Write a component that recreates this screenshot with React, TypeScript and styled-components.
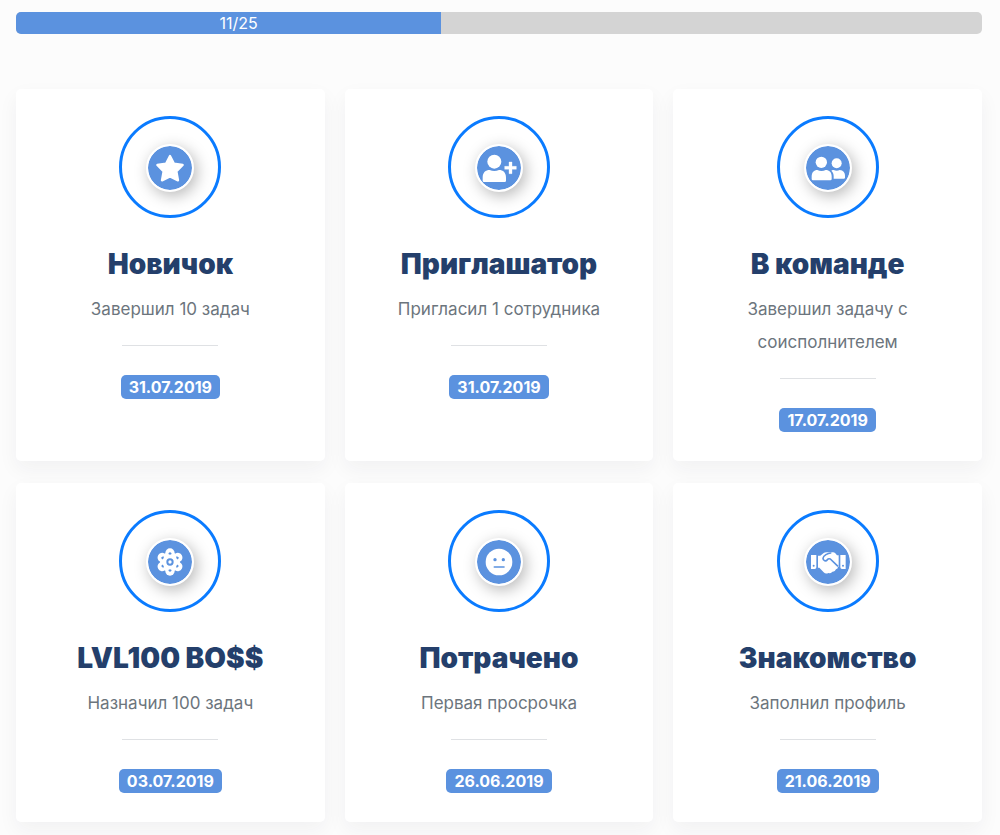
import React from 'react';
import styled, { createGlobalStyle } from 'styled-components';

const GlobalStyle = createGlobalStyle`
  *, *::before, *::after { box-sizing: border-box; }
  body {
    margin: 0;
    background: #fcfcfc;
    font-family: Inter, "Liberation Sans", sans-serif;
    font-optical-sizing: none;
    color: #6c757d;
  }
`;

const Page = styled.main`
  padding: 12px 18px 13px 16px;
`;

const ProgressTrack = styled.div`
  height: 22px;
  border-radius: 5px;
  background: #d4d4d4;
  overflow: hidden;
`;

const ProgressFill = styled.div`
  height: 100%;
  padding-left: 20px;
  background: #5b92df;
  color: #fff;
  font-size: 16px;
  line-height: 22px;
  text-align: center;
`;

const CardGrid = styled.section`
  display: grid;
  grid-template-columns: repeat(3, minmax(0, 1fr));
  gap: 22px 20px;
  margin-top: 55px;
`;

const Card = styled.article`
  display: flex;
  flex-direction: column;
  align-items: center;
  padding: 27px 32px 29px;
  border-radius: 5px;
  background: #fff;
  box-shadow: 0 8px 20px rgba(31, 45, 61, 0.05);
  text-align: center;
`;

const Ring = styled.div`
  display: grid;
  place-items: center;
  width: 102px;
  height: 102px;
  padding-top: 2px;
  border: 3px solid #0a7bff;
  border-radius: 50%;
`;

const Disc = styled.div`
  width: 48px;
  height: 48px;
  border: 2px solid #fff;
  border-radius: 50%;
  background: #5b92df;
  background-clip: padding-box;
  box-shadow: 3px 4px 15px rgba(0, 0, 0, 0.28);
`;

const Glyph = styled.svg`
  display: block;
  width: 44px;
  height: 44px;
`;

const Title = styled.h2`
  margin: 28px 0 11px;
  color: #243f6b;
  font-size: 28px;
  font-weight: 900;
  line-height: 36px;
`;

const Description = styled.p`
  margin: 0;
  font-size: 17px;
  line-height: 33px;
`;

const Divider = styled.hr`
  width: 96px;
  margin: 19px 0 29px;
  border: 0;
  border-top: 1px solid #dfe1e4;
`;

const DateBadge = styled.time`
  padding: 0 8px;
  border-radius: 5px;
  background: #5b92df;
  color: #fff;
  font-size: 16px;
  font-weight: 700;
  line-height: 24px;
`;

type IconName = 'star' | 'invite' | 'team' | 'atom' | 'meh' | 'handshake';

const BLUE = '#5b92df';
const SIXTHS = [0, 60, 120, 180, 240, 300];

const icons: Record<IconName, React.ReactNode> = {
  star: (
    <path
      d="M180 138 L192 161 L218 165 L199 184 L204 211 L180 199 L156 211 L161 184 L142 165 L168 161 Z"
      stroke="#fff" strokeWidth="7" strokeLinejoin="round"
    />
  ),
  invite: (
    <>
      <circle cx="166" cy="155" r="21" />
      <path d="M131 212 V203 C131 187 140 180 152 180 C161 184 171 184 180 180 C192 180 201 187 201 203 V212 Q201 216 197 216 H135 Q131 216 131 212 Z" />
      <path d="M210 156 h9 v13 h13 v9 h-13 v13 h-9 v-13 h-13 v-9 h13 Z" stroke="#fff" strokeWidth="1" strokeLinejoin="round" />
    </>
  ),
  team: (
    <>
      <circle cx="160" cy="157" r="17" />
      <path d="M131 207 V199 C131 187 138 180 148 180 C156 184 165 184 173 180 C184 180 191 187 191 199 V207 Q191 211 187 211 H135 Q131 211 131 207 Z" />
      <circle cx="206" cy="160" r="15" />
      <path d="M190 182 C193 180 195 180 197 180 C203 183 210 183 215 180 C226 181 231 188 231 197 V203 Q231 206 227 206 H197 V199 C197 191 195 187 190 182 Z" />
    </>
  ),
  atom: (
    <>
      {SIXTHS.map((a) => (
        <circle key={a} cx="180" cy="147" r="14" transform={`rotate(${a} 180 174)`} />
      ))}
      <circle cx="180" cy="174" r="30" />
      <circle cx="180" cy="174" r="8" fill="none" stroke={BLUE} strokeWidth="6" />
      {SIXTHS.map((a) => (
        <path key={a} fill={BLUE} d="M175 150 Q176 145 180 145 Q184 145 185 150 L180 152 Z" transform={`rotate(${a} 180 174)`} />
      ))}
    </>
  ),
  meh: (
    <>
      <circle cx="180" cy="174" r="40" />
      <circle cx="168" cy="167" r="5" fill={BLUE} />
      <circle cx="193" cy="167" r="5" fill={BLUE} />
      <path d="M166 189 H195" stroke={BLUE} strokeWidth="5" strokeLinecap="round" />
    </>
  ),
  handshake: (
    <>
      <path fillRule="evenodd" d="M129 153 H145 V190 Q145 195 140 195 H129 Z M134 185 a3 3 0 1 0 6 0 a3 3 0 1 0 -6 0 Z" />
      <path fillRule="evenodd" d="M233 153 H217 V190 Q217 195 222 195 H233 Z M222 185 a3 3 0 1 0 6 0 a3 3 0 1 0 -6 0 Z" />
      <path d="M150 155 H157 L167 147 Q170 145 175 145 H195 Q199 145 202 148 L207 154 H212 V188 H210 Q210 195 204 196 Q201 204 193 203 Q188 209 181 207 Q173 211 167 205 L154 191 H150 Z" />
      <path d="M190 147 C180 146 165 156 165 163 C165 171 174 173 178 167 Q181 163 187 165 L210 187" fill="none" stroke={BLUE} strokeWidth="5" strokeLinejoin="round" />
    </>
  ),
};

interface Achievement {
  icon: IconName;
  title: string;
  description: string;
  date: string;
}

const achievements: Achievement[] = [
  { icon: 'star', title: 'Новичок', description: 'Завершил 10 задач', date: '31.07.2019' },
  { icon: 'invite', title: 'Приглашатор', description: 'Пригласил 1 сотрудника', date: '31.07.2019' },
  { icon: 'team', title: 'В команде', description: 'Завершил задачу с соисполнителем', date: '17.07.2019' },
  { icon: 'atom', title: 'LVL100 BO$$', description: 'Назначил 100 задач', date: '03.07.2019' },
  { icon: 'meh', title: 'Потрачено', description: 'Первая просрочка', date: '26.06.2019' },
  { icon: 'handshake', title: 'Знакомство', description: 'Заполнил профиль', date: '21.06.2019' },
];

const done = 11;
const total = 25;

export default function App() {
  return (
    <>
      <GlobalStyle />
      <Page>
        <ProgressTrack role="progressbar" aria-label="Достижения" aria-valuemin={0} aria-valuenow={done} aria-valuemax={total}>
          <ProgressFill style={{ width: `${(done / total) * 100}%` }}>
            {done}/{total}
          </ProgressFill>
        </ProgressTrack>
        <CardGrid>
          {achievements.map((item) => (
            <Card key={item.title}>
              <Ring>
                <Disc>
                  <Glyph viewBox="114 108 132 132" fill="#fff" aria-hidden="true">
                    {icons[item.icon]}
                  </Glyph>
                </Disc>
              </Ring>
              <Title>{item.title}</Title>
              <Description>{item.description}</Description>
              <Divider />
              <DateBadge dateTime={item.date.split('.').reverse().join('-')}>{item.date}</DateBadge>
            </Card>
          ))}
        </CardGrid>
      </Page>
    </>
  );
}
